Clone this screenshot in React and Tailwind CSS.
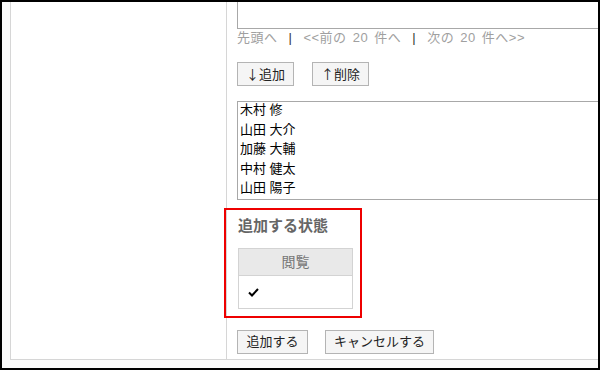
import React from 'react';

const members = ['木村 修', '山田 大介', '加藤 大輔', '中村 健太', '山田 陽子'];

const cjk = "font-[family-name:'Noto_Sans_CJK_JP',sans-serif]";

const Btn = ({ children, w }) => (
  <button
    type="button"
    className={`h-[24px] ${w} border border-[#b4b4b4] bg-[#f5f5f5] text-[13px] leading-[22px] text-[#222] text-center`}
  >
    {children}
  </button>
);

export default function App() {
  return (
    <div className="w-[600px] h-[370px] border-2 border-black bg-[#fafafa] overflow-hidden pl-2 pb-2 font-[family-name:'Liberation_Sans','Noto_Sans_CJK_JP',sans-serif]">
      <div className="h-full bg-white border-l border-b border-[#d6d6d6] flex">
        <div className="w-[216px] shrink-0 border-r border-[#d6d6d6]" />

        <div className="flex-1 pl-[10px] flex flex-col">
          {/* text area, top cut off */}
          <div className="h-[27px] w-[400px] border-l border-r border-b border-[#a8a8a8] shrink-0" />

          <div className="h-[20px] leading-[18px] text-[13px] tracking-[0.5px] [word-spacing:2px] text-[#a0a0a0] flex whitespace-nowrap">
            <span>先頭へ</span>
            <span className="mx-[11px] text-[#333]">|</span>
            <span>&lt;&lt;前の 20 件へ</span>
            <span className="mx-[11px] text-[#333]">|</span>
            <span>次の 20 件へ&gt;&gt;</span>
          </div>

          <div className="mt-[13px] flex gap-[18px]">
            <Btn w="w-[57px]"><span className={cjk}>↓</span>追加</Btn>
            <Btn w="w-[57px]"><span className={cjk}>↑</span>削除</Btn>
          </div>

          <div className="mt-[15px] h-[99px] w-[400px] shrink-0 border border-[#a8a8a8] pl-[2px] text-[13px] leading-[19.5px] text-black overflow-hidden">
            <div className="-mt-[2px]">
              {members.map((m) => (
                <div key={m}>{m}</div>
              ))}
            </div>
          </div>

          <div className="mt-[8px] -ml-[13px] w-[138px] h-[110px] shrink-0 border-2 border-[#ee0000] pl-[12px] pr-[8px] pt-[6px]">
            <p className="text-[15px] leading-[20px] font-bold text-[#666]">追加する状態</p>
            <table className="mt-[12px] w-[115px] border-collapse text-[14px]">
              <thead>
                <tr className="bg-[#e9e9e9]">
                  <th className="h-[27px] border border-[#d3d3d3] font-normal text-[#777] leading-[26px]">閲覧</th>
                </tr>
              </thead>
              <tbody>
                <tr>
                  <td className="h-[33px] border border-[#d3d3d3] pl-[9px]">
                    <svg width="11" height="9" viewBox="0 0 11 9" className="block">
                      <path d="M1 4.5 L4 7.5 L10 1" fill="none" stroke="#000" strokeWidth="2" />
                    </svg>
                  </td>
                </tr>
              </tbody>
            </table>
          </div>

          <div className="mt-[12px] flex gap-[17px]">
            <Btn w="w-[71px]">追加する</Btn>
            <Btn w="w-[109px]">キャンセルする</Btn>
          </div>
        </div>
      </div>
    </div>
  );
}
